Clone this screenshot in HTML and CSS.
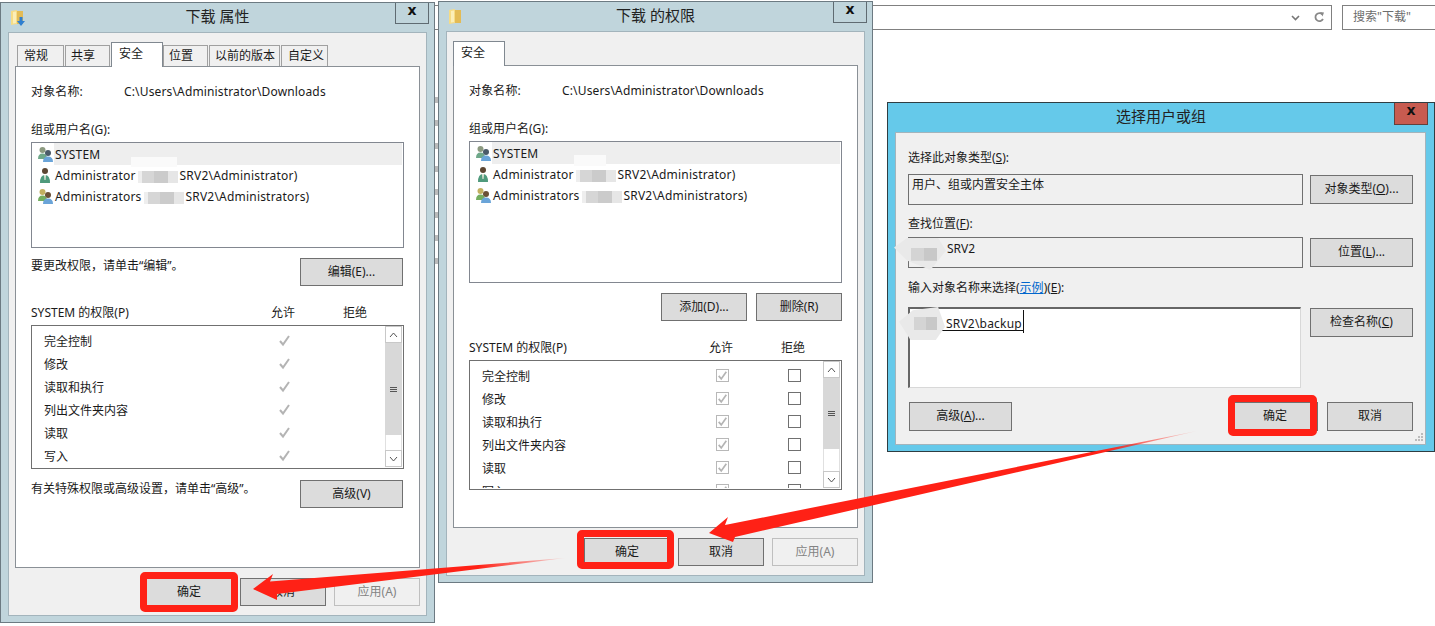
FILE: index.html
```html
<!DOCTYPE html>
<html lang="en">
<head>
  <meta charset="UTF-8">
  <title>下载 的权限</title>
  <link rel="stylesheet" href="styles.css">
</head>
<body>
<svg width="0" height="0" class="defs">
  <defs>
    <symbol id="folder" viewBox="0 0 14 17">
      <path d="M1 2 L7 1 L7 15 L1 16 Z" fill="#f6dc86"/>
      <path d="M7 2 L13 2 L13 15 L7 15 Z" fill="#e3bb55"/>
      <path d="M3 3 L6 2.500 L6 14 L3 14.500 Z" fill="#fbeeb8"/>
    </symbol>
    <symbol id="group" viewBox="0 0 17 17">
      <circle cx="5.500" cy="4" r="3" fill="#8c9a80"/>
      <path d="M1 13 Q1 7.500 5.500 7.500 Q10 7.500 10 13 Z" fill="#6fa88a"/>
      <circle cx="11" cy="7" r="3" fill="#4a5a68"/>
      <path d="M6 16 Q6 10.500 11 10.500 Q16 10.500 16 16 Z" fill="#6aa4d8"/>
    </symbol>
    <symbol id="group2" viewBox="0 0 17 17">
      <circle cx="5.500" cy="4" r="3" fill="#c2b060"/>
      <path d="M1 13 Q1 7.500 5.500 7.500 Q10 7.500 10 13 Z" fill="#74ae60"/>
      <circle cx="11" cy="7" r="3" fill="#6a5036"/>
      <path d="M6 16 Q6 10.500 11 10.500 Q16 10.500 16 16 Z" fill="#6aa4d8"/>
    </symbol>
    <symbol id="admin" viewBox="0 0 17 17">
      <circle cx="8" cy="4" r="3" fill="#5c4632"/>
      <path d="M3 16 Q3 8 8 8 Q13 8 13 16 Z" fill="#4f9a7c"/>
      <path d="M7 8 L9 8 L8.500 13 L7.500 13 Z" fill="#e6e6d8"/>
    </symbol>
    <symbol id="tick" viewBox="0 0 13 13">
      <path d="M2 7 L5 10.500 L11 2" fill="none" stroke="#b4b4b4" stroke-width="2"/>
    </symbol>
    <linearGradient id="fade1" gradientUnits="userSpaceOnUse" x1="565" y1="558" x2="420" y2="572">
      <stop offset="0" stop-color="#ff2116" stop-opacity="0.1"/>
      <stop offset="0.6" stop-color="#ff2116"/>
    </linearGradient>
    <linearGradient id="fade2" gradientUnits="userSpaceOnUse" x1="1197" y1="431" x2="1040" y2="466">
      <stop offset="0" stop-color="#ff2116" stop-opacity="0.1"/>
      <stop offset="0.6" stop-color="#ff2116"/>
    </linearGradient>
  </defs>
</svg>

<div class="desk">
  <!-- explorer behind the dialogs -->
  <div class="addr">
    <svg class="chev" width="9" height="6" viewBox="0 0 9 6"><path d="M1 1 L4.500 4.500 L8 1" fill="none" stroke="#777" stroke-width="1.600"/></svg>
    <svg class="refresh" width="12" height="13" viewBox="0 0 12 13"><path d="M9.500 3.500 A4 4 0 1 0 10 8" fill="none" stroke="#888" stroke-width="1.800"/><path d="M7 1 L11 1.500 L9.500 5.500 Z" fill="#888"/></svg>
  </div>
  <div class="search">搜索"下载"</div>
  <div class="scraps"></div>

  <!-- properties -->
  <div class="win win-props">
    <div class="titlebar">
      <svg class="ficon" width="14" height="17"><use href="#folder"/></svg>
      <svg class="farrow" width="8" height="9" viewBox="0 0 8 9"><path d="M2.500 0 H5.500 V4 H8 L4 9 L0 4 H2.500 Z" fill="#2f7fd0"/></svg>
      <span class="title">下载 属性</span>
      <span class="close">x</span>
    </div>
    <div class="client">
      <div class="tabs">
        <span class="tab t47">常规</span>
        <span class="tab t46">共享</span>
        <span class="tab on">安全</span>
        <span class="tab t46">位置</span>
        <span class="tab t72">以前的版本</span>
        <span class="tab t47">自定义</span>
      </div>
      <div class="panel">
        <div class="obj"><span class="obj-k">对象名称:</span><span>C:\Users\Administrator\Downloads</span></div>
        <div class="lbl">组或用户名(G):</div>
        <div class="users users-short">
          <div class="user sel"><svg width="17" height="17"><use href="#group"/></svg><span class="uname">SYSTEM</span></div>
          <div class="user"><svg width="17" height="17"><use href="#admin"/></svg><span class="uname">Administrator<i class="mask"></i>SRV2\Administrator)</span></div>
          <div class="user"><svg width="17" height="17"><use href="#group2"/></svg><span class="uname">Administrators<i class="mask"></i>SRV2\Administrators)</span></div>
        </div>
        <div class="note">
          <span>要更改权限，请单击“编辑”。</span>
          <span class="btn wide">编辑(E)...</span>
        </div>
        <div class="perm-head"><span>SYSTEM 的权限(P)</span><span class="c">允许</span><span class="c">拒绝</span></div>
        <div class="perms perms-tall">
          <div class="perm-rows">
            <div class="perm"><span>完全控制</span><svg class="tick" width="13" height="13"><use href="#tick"/></svg></div>
            <div class="perm"><span>修改</span><svg class="tick" width="13" height="13"><use href="#tick"/></svg></div>
            <div class="perm"><span>读取和执行</span><svg class="tick" width="13" height="13"><use href="#tick"/></svg></div>
            <div class="perm"><span>列出文件夹内容</span><svg class="tick" width="13" height="13"><use href="#tick"/></svg></div>
            <div class="perm"><span>读取</span><svg class="tick" width="13" height="13"><use href="#tick"/></svg></div>
            <div class="perm"><span>写入</span><svg class="tick" width="13" height="13"><use href="#tick"/></svg></div>
          </div>
          <div class="sbar">
            <span class="sb-btn"><svg width="9" height="6" viewBox="0 0 9 6"><path d="M1 5 L4.500 1 L8 5" fill="none" stroke="#555" stroke-width="1"/></svg></span>
            <span class="thumb thumb-tall"><i></i><i></i><i></i></span>
            <span class="track"></span>
            <span class="sb-btn"><svg width="9" height="6" viewBox="0 0 9 6"><path d="M1 1 L4.500 5 L8 1" fill="none" stroke="#555" stroke-width="1"/></svg></span>
          </div>
        </div>
        <div class="note note-adv">
          <span>有关特殊权限或高级设置，请单击“高级”。</span>
          <span class="btn wide">高级(V)</span>
        </div>
      </div>
      <div class="actions">
        <span class="btn">确定</span>
        <span class="btn">取消</span>
        <span class="btn off">应用(A)</span>
      </div>
    </div>
  </div>

  <!-- permissions -->
  <div class="win win-perms">
    <div class="titlebar">
      <svg class="ficon" width="14" height="17"><use href="#folder"/></svg>
      <span class="title">下载 的权限</span>
      <span class="close">x</span>
    </div>
    <div class="client">
      <div class="tabs">
        <span class="tab on first">安全</span>
      </div>
      <div class="panel">
        <div class="obj"><span class="obj-k">对象名称:</span><span>C:\Users\Administrator\Downloads</span></div>
        <div class="lbl">组或用户名(G):</div>
        <div class="users users-long">
          <div class="user sel"><svg width="17" height="17"><use href="#group"/></svg><span class="uname">SYSTEM</span></div>
          <div class="user"><svg width="17" height="17"><use href="#admin"/></svg><span class="uname">Administrator<i class="mask"></i>SRV2\Administrator)</span></div>
          <div class="user"><svg width="17" height="17"><use href="#group2"/></svg><span class="uname">Administrators<i class="mask"></i>SRV2\Administrators)</span></div>
        </div>
        <div class="add-row">
          <span class="btn">添加(D)...</span>
          <span class="btn">删除(R)</span>
        </div>
        <div class="perm-head"><span>SYSTEM 的权限(P)</span><span class="c">允许</span><span class="c">拒绝</span></div>
        <div class="perms perms-short">
          <div class="perm-rows">
            <div class="perm"><span>完全控制</span><span class="cb dis"><svg width="11" height="11"><use href="#tick"/></svg></span><span class="cb"></span></div>
            <div class="perm"><span>修改</span><span class="cb dis"><svg width="11" height="11"><use href="#tick"/></svg></span><span class="cb"></span></div>
            <div class="perm"><span>读取和执行</span><span class="cb dis"><svg width="11" height="11"><use href="#tick"/></svg></span><span class="cb"></span></div>
            <div class="perm"><span>列出文件夹内容</span><span class="cb dis"><svg width="11" height="11"><use href="#tick"/></svg></span><span class="cb"></span></div>
            <div class="perm"><span>读取</span><span class="cb dis"><svg width="11" height="11"><use href="#tick"/></svg></span><span class="cb"></span></div>
            <div class="perm"><span>写入</span><span class="cb dis"><svg width="11" height="11"><use href="#tick"/></svg></span><span class="cb"></span></div>
          </div>
          <div class="sbar">
            <span class="sb-btn"><svg width="9" height="6" viewBox="0 0 9 6"><path d="M1 5 L4.500 1 L8 5" fill="none" stroke="#555" stroke-width="1"/></svg></span>
            <span class="thumb thumb-short"><i></i><i></i><i></i></span>
            <span class="track"></span>
            <span class="sb-btn"><svg width="9" height="6" viewBox="0 0 9 6"><path d="M1 1 L4.500 5 L8 1" fill="none" stroke="#555" stroke-width="1"/></svg></span>
          </div>
        </div>
      </div>
      <div class="actions">
        <span class="btn">确定</span>
        <span class="btn">取消</span>
        <span class="btn off">应用(A)</span>
      </div>
    </div>
  </div>

  <!-- select user -->
  <div class="win win-pick">
    <div class="titlebar">
      <span class="title">选择用户或组</span>
      <span class="close hot">x</span>
    </div>
    <div class="client">
      <div class="pick-lbl">选择此对象类型(<u>S</u>):</div>
      <div class="pick-row">
        <div class="field">用户、组或内置安全主体</div>
        <span class="btn pick-btn">对象类型(<u>O</u>)...</span>
      </div>
      <div class="pick-lbl lbl-loc">查找位置(<u>F</u>):</div>
      <div class="pick-row row-loc">
        <div class="field field-loc">SRV2</div>
        <span class="btn pick-btn">位置(<u>L</u>)...</span>
      </div>
      <div class="pick-lbl lbl-name">输入对象名称来选择(<a class="link">示例</a>)(<u>E</u>):</div>
      <div class="pick-row pick-row-tall">
        <div class="entry"><span class="typed">SRV2\backup</span></div>
        <span class="btn pick-btn">检查名称(<u>C</u>)</span>
      </div>
      <div class="pick-foot">
        <span class="btn adv-btn">高级(<u>A</u>)...</span>
        <span class="btn ok-btn">确定</span>
        <span class="btn">取消</span>
      </div>
      <svg class="grip" width="9" height="9" viewBox="0 0 9 9" fill="#bbb">
        <rect x="7" y="0" width="2" height="2"/><rect x="4" y="3" width="2" height="2"/><rect x="7" y="3" width="2" height="2"/>
        <rect x="1" y="6" width="2" height="2"/><rect x="4" y="6" width="2" height="2"/><rect x="7" y="6" width="2" height="2"/>
      </svg>
    </div>
  </div>

  <!-- annotations drawn over the dialogs -->
  <div class="blot blot-loc"></div>
  <div class="blot blot-entry"></div>
  <div class="smear smear-a"></div>
  <div class="smear smear-b"></div>
  <div class="redbox rb1"></div>
  <div class="redbox rb2"></div>
  <div class="redbox rb3"></div>
  <svg class="arrows" width="1435" height="626">
    <path d="M253 589 L273 574 L270 581.500 L565 558 L277 594 L277 600 Z" fill="url(#fade1)"/>
    <path d="M709 533 L728 517 L725 525 L1197 431 L735 537 L733 542 Z" fill="url(#fade2)"/>
  </svg>
</div>
</body>
</html>
```

FILE: styles.css
```css
* {
  box-sizing: border-box;
}

html, body {
  margin: 0;
  background: #fff;
}

body {
  font-family: "Noto Sans", "Noto Sans CJK SC", sans-serif;
  font-size: 12px;
  color: #1a1a1a;
  overflow: hidden;
}

.defs {
  position: absolute;
}

.desk {
  position: relative;
  width: 1435px;
  height: 626px;
  overflow: hidden;
}

/* explorer behind */
.addr {
  position: absolute;
  left: 400px;
  top: 5px;
  width: 932px;
  height: 25px;
  border: 1px solid #808080;
}

.chev {
  position: absolute;
  right: 31px;
  top: 9px;
}

.refresh {
  position: absolute;
  right: 6px;
  top: 5px;
}

.search {
  position: absolute;
  left: 1342px;
  top: 5px;
  width: 100px;
  height: 25px;
  border: 1px solid #808080;
  padding-left: 10px;
  line-height: 22px;
  color: #6d6d6d;
}

.scraps {
  position: absolute;
  left: 435px;
  top: 80px;
  width: 3px;
  height: 190px;
  background: repeating-linear-gradient(#fff 0, #fff 17px, #bbb 17px, #bbb 23px);
}

/* dialogs */
.win {
  position: absolute;
  display: flex;
  flex-direction: column;
  border: 1px solid #6c7a82;
  background: #c0d5dc;
}

.win-props {
  left: 0;
  top: 2px;
  width: 435px;
  height: 621px;
}

.win-perms {
  left: 438px;
  top: 1px;
  width: 435px;
  height: 582px;
}

.win-pick {
  left: 887px;
  top: 102px;
  width: 548px;
  height: 350px;
  background: #65c9ea;
  border-color: #2f3d42;
}

.titlebar {
  flex: none;
  height: 29px;
  position: relative;
  display: flex;
  align-items: center;
  justify-content: center;
  padding-bottom: 2px;
}

.title {
  font-size: 15px;
  line-height: 27px;
  color: #222;
}

.ficon {
  position: absolute;
  left: 9px;
  top: 6px;
}

.farrow {
  position: absolute;
  left: 16px;
  top: 14px;
}

.close {
  position: absolute;
  right: 5px;
  top: 0;
  width: 34px;
  height: 21px;
  border: 1px solid #5f6b72;
  border-top: 0;
  text-align: center;
  font-family: "DejaVu Sans", sans-serif;
  font-weight: bold;
  font-size: 14px;
  line-height: 14px;
  color: #111;
}

.close.hot {
  right: 6px;
  height: 22px;
  background: #c75b50;
  border-color: #63403c;
}

.client {
  flex: 1;
  display: flex;
  flex-direction: column;
  margin: 0 7px 6px;
  padding: 9px 6px 0;
  background: #f0f0f0;
  border: 1px solid #a3b4bc;
}

/* tabs */
.tabs {
  display: flex;
  align-items: flex-end;
  height: 25px;
  padding-left: 2px;
  margin-bottom: -1px;
}

.tab {
  height: 22px;
  margin-right: 1px;
  padding-left: 6px;
  border: 1px solid #a0a0a0;
  border-bottom: 0;
  line-height: 20px;
  white-space: nowrap;
}

.t46 { width: 45px; padding-left: 5px; }
.t47 { width: 47px; }
.t72 { width: 71px; padding-left: 5px; }

.tab.on {
  width: 52px;
  height: 25px;
  margin-right: 0;
  padding-left: 7px;
  background: #fff;
  border-color: #808890;
  position: relative;
  line-height: 22px;
  z-index: 1;
}

.tab.first {
  margin-left: -2px;
}

.panel {
  height: 502px;
  padding: 0 15px;
  background: #fff;
  border: 1px solid #8a9096;
}

.win-perms .panel {
  height: 463px;
}

.obj {
  display: flex;
  height: 20px;
  margin-top: 14px;
  align-items: center;
  letter-spacing: .15px;
}

.obj-k {
  width: 93px;
}

.lbl {
  height: 18px;
  margin-top: 20px;
  line-height: 18px;
}

.users {
  margin-top: 3px;
  padding: 0 1px;
  border: 1px solid #828790;
}

.users-short { height: 106px; }
.users-long { height: 142px; }

.user {
  display: flex;
  align-items: center;
  height: 21px;
  padding-left: 4px;
}

.user.sel {
  height: 22px;
  background: linear-gradient(90deg, #fff 21px, #eeeeee 21px);
}

.uname {
  margin-left: 1px;
  white-space: nowrap;
  letter-spacing: .2px;
}

.mask {
  display: inline-block;
  vertical-align: middle;
  width: 40px;
  height: 12px;
  margin: 0 2px;
  background: linear-gradient(90deg, #eee 0 10%, #d6d6d6 10% 40%, #cbcbcb 40% 75%, #e6e6e6 75%);
}

.note {
  display: flex;
  justify-content: space-between;
  margin-top: 10px;
  height: 28px;
  line-height: 16px;
}

.note-adv {
  margin-top: 11px;
  line-height: 18px;
}

.btn {
  display: block;
  flex: none;
  width: 86px;
  height: 28px;
  background: #dcdcdc;
  border: 1px solid #707070;
  text-align: center;
  line-height: 25px;
  white-space: nowrap;
}

.btn.wide {
  width: 103px;
  margin-right: 1px;
}

.btn.off {
  background: #f0f0f0;
  border-color: #bfbfbf;
  color: #838383;
}

.add-row {
  display: flex;
  justify-content: flex-end;
  gap: 9px;
  margin-top: 10px;
}

.perm-head {
  display: grid;
  grid-template-columns: 216px 72px 72px;
  height: 16px;
  margin-top: 18px;
  line-height: 18px;
}

.c {
  text-align: center;
}

.perms {
  display: flex;
  margin-top: 5px;
  padding: 0 1px 1px 0;
  border: 1px solid #707070;
  overflow: hidden;
}

.perms-tall { height: 144px; }
.perms-short { height: 130px; }

.perm-rows {
  flex: 1;
  padding: 3px 0 0 12px;
  overflow: hidden;
}

.perm {
  display: grid;
  grid-template-columns: 204px 72px 72px;
  justify-items: start;
  align-items: center;
  height: 23px;
}

.tick {
  justify-self: center;
}

.cb {
  justify-self: center;
  display: flex;
  align-items: center;
  justify-content: center;
  width: 13px;
  height: 13px;
  border: 1px solid #707070;
}

.cb.dis {
  border-color: #b8b8b8;
}

.sbar {
  flex: none;
  width: 17px;
  display: flex;
  flex-direction: column;
}

.sb-btn {
  flex: none;
  height: 17px;
  display: flex;
  align-items: center;
  justify-content: center;
  border: 1px solid #c8c8c8;
}

.thumb {
  flex: none;
  display: flex;
  flex-direction: column;
  align-items: center;
  justify-content: center;
  gap: 1px;
  background: #d8d8d8;
}

.thumb i {
  width: 7px;
  height: 1px;
  background: #555;
}

.thumb-tall { height: 92px; }
.thumb-short { height: 71px; }

.track {
  flex: 1;
  border: 1px solid #e0e0e0;
  border-width: 0 1px;
}

.actions {
  display: flex;
  justify-content: flex-end;
  gap: 8px;
  margin-top: 10px;
}

/* select user */
.win-pick .client {
  position: relative;
  margin-right: 8px;
  padding: 16px 12px 0;
}

.pick-lbl {
  height: 16px;
  margin-bottom: 9px;
  line-height: 18px;
}

.lbl-loc { margin-bottom: 6px; }
.lbl-name { margin-bottom: 12px; }

.pick-row {
  display: flex;
  justify-content: space-between;
  height: 31px;
  margin-bottom: 10px;
}

.row-loc {
  margin-bottom: 11px;
}

.pick-row-tall {
  height: 81px;
  margin-bottom: 14px;
}

.pick-btn {
  width: 103px;
  height: 29px;
  margin-top: 1px;
}

.field {
  width: 395px;
  border: 1px solid #707070;
  padding: 2px 3px;
  line-height: 16px;
}

.field-loc {
  padding: 3px 0 0 38px;
}

.entry {
  width: 393px;
  border: 1px solid #d8d8d8;
  border-top: 2px solid #666;
  border-left: 2px solid #666;
  background: #fff;
}

.typed {
  display: inline-block;
  position: relative;
  height: 18px;
  line-height: 22px;
  margin-top: 4px;
  padding: 0 2px 0 36px;
  border-bottom: 1px solid #111;
  letter-spacing: .2px;
}

.typed::after {
  content: "";
  position: absolute;
  right: 0;
  top: -3px;
  width: 1px;
  height: 23px;
  background: #111;
}

.link {
  color: #0066cc;
  text-decoration: underline;
}

.pick-foot {
  display: flex;
}

.pick-foot .btn {
  height: 29px;
}

.adv-btn {
  width: 103px;
  margin-left: 1px;
}

.ok-btn {
  margin-left: auto;
  margin-right: 9px;
}

.grip {
  position: absolute;
  right: 2px;
  bottom: 2px;
}

/* annotations */
.redbox {
  position: absolute;
  border: 7px solid #ff2116;
  border-radius: 5px;
}

.rb1 { left: 140px; top: 572px; width: 98px; height: 40px; }
.rb2 { left: 577px; top: 530px; width: 97px; height: 39px; }
.rb3 { left: 1228px; top: 395px; width: 89px; height: 41px; }

.arrows {
  position: absolute;
  left: 0;
  top: 0;
}

.blot {
  position: absolute;
  background:
    linear-gradient(90deg, transparent 32%, #d4d4d4 32% 58%, #c8c8c8 58% 82%, transparent 82%) center / 100% 40% no-repeat,
    #e9e9e9;
}

.blot-loc {
  left: 894px;
  top: 238px;
  width: 52px;
  height: 32px;
  clip-path: polygon(0 30%, 25% 0, 85% 0, 100% 40%, 70% 100%, 25% 70%);
}

.blot-entry {
  left: 899px;
  top: 307px;
  width: 46px;
  height: 33px;
  clip-path: polygon(0 45%, 30% 10%, 85% 0, 100% 60%, 80% 100%, 25% 100%);
}

.smear {
  position: absolute;
  background: #fafafa;
}

.smear-a { left: 131px; top: 157px; width: 46px; height: 10px; }
.smear-b { left: 574px; top: 155px; width: 32px; height: 11px; }
```
